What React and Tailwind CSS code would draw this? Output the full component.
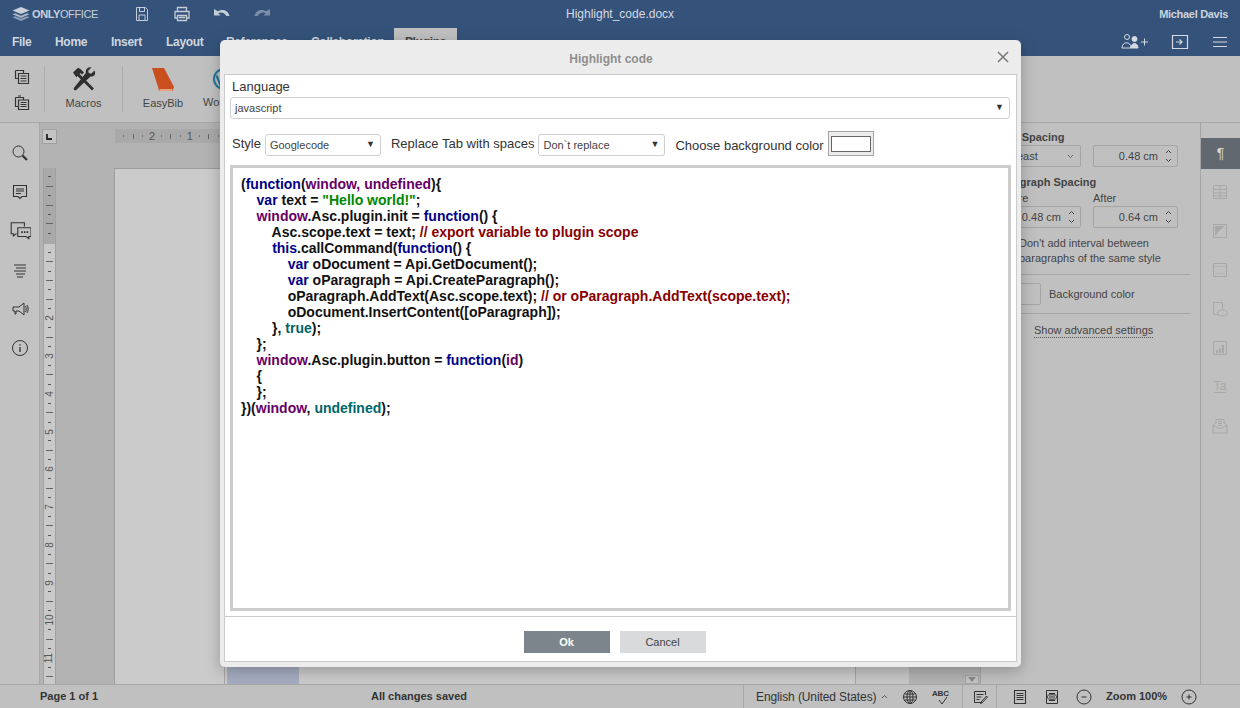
const FONT = "font-['Liberation_Sans',Arial,sans-serif]";
const TICK_H = Array.from({ length: 11 }, (_, i) => i);
const TICK_V = Array.from({ length: 54 }, (_, i) => i);

// token colours for the highlighted code
const K = 'text-[#000088]';
const P = 'text-[#660066]';
const S = 'text-[#008800]';
const C = 'text-[#880000]';
const L = 'text-[#006666]';

const CODE = [
  [['(', ''], ['function', K], ['(', ''], ['window, undefined', P], [')', ''], ['{', '']],
  [['    ', ''], ['var', K], [' text = ', ''], ['"Hello world!"', S], [';', '']],
  [['    ', ''], ['window', P], ['.Asc.plugin.init = ', ''], ['function', K], ['() {', '']],
  [['        Asc.scope.text = text; ', ''], ['// export variable to plugin scope', C]],
  [['        ', ''], ['this', K], ['.callCommand(', ''], ['function', K], ['() {', '']],
  [['            ', ''], ['var', K], [' oDocument = Api.GetDocument();', '']],
  [['            ', ''], ['var', K], [' oParagraph = Api.CreateParagraph();', '']],
  [['            oParagraph.AddText(Asc.scope.text); ', ''], ['// or oParagraph.AddText(scope.text);', C]],
  [['            oDocument.InsertContent([oParagraph]);', '']],
  [['        }, ', ''], ['true', L], [');', '']],
  [['    };', '']],
  [['    ', ''], ['window', P], ['.Asc.plugin.button = ', ''], ['function', K], ['(', ''], ['id', P], [')', '']],
  [['    {', '']],
  [['    };', '']],
  [['})(', ''], ['window', P], [', ', ''], ['undefined', L], [');', '']],
];

function Svg({ size = 20, box = 20, className = '', children }) {
  return (
    <svg width={size} height={size} viewBox={`0 0 ${box} ${box}`} fill="none" stroke="currentColor" strokeWidth="1" className={`shrink-0 ${className}`}>
      {children}
    </svg>
  );
}

function TopIcon({ name }) {
  if (name === 'save') return <Svg><path d="M4.500 3.500h9l2 2v11h-11z M7.500 3.500v4h5v-4 M7 16v-5h6v5" /></Svg>;
  if (name === 'print') return <Svg><path d="M5.500 7V3.500h9V7 M5.500 14H3V7.500h14V14h-2.500 M5.500 11.500h9v5h-9z M7 13.500h6" strokeWidth="1.300" /></Svg>;
  const undo = <path d="M2 5v6.500h6.500L6.300 9.300c2.200-1.500 5.500-1.200 8.200 2.700h3c-1-5-6-8-11.700-4.700z" fill="currentColor" stroke="none" />;
  if (name === 'undo') return <Svg>{undo}</Svg>;
  return <Svg className="scale-x-[-1]">{undo}</Svg>;
}

function Logo() {
  return (
    <svg width="18" height="14" viewBox="0 0 18 14" fill="#c9d0da" className="shrink-0">
      <path d="M9 0l8.500 3.500L9 7 .5 3.500z" />
      <path d="M3 6.300L.5 7.300 9 11l8.500-3.700L15 6.300 9 8.700z" opacity=".8" />
      <path d="M3 9.300L.5 10.300 9 14l8.500-3.700L15 9.300 9 11.700z" opacity=".6" />
    </svg>
  );
}

function CopyIcon({ paste }) {
  return (
    <svg width="16" height="16" viewBox="0 0 16 16" fill="none" stroke="#333" strokeWidth="1.200" className="shrink-0">
      {paste ? (
        <path d="M1.500 2.500h8v2 M1.500 2.500v9h3 M4.500 5h10v9.500h-10z M6.500 7.500h6 M6.500 9.500h6 M6.500 11.500h6 M4 1h3" />
      ) : (
        <path d="M1.500 1.500h8v3 M1.500 1.500v8h3 M4.500 4.500h10v10h-10z M6.500 7h6 M6.500 9.500h6 M6.500 12h6" />
      )}
    </svg>
  );
}

function Macros() {
  return (
    <svg width="24" height="24" viewBox="0 0 24 24" className="shrink-0" fill="#2f2f2f">
      <path d="M1 5.500L6 .8l2.500 1.200L12 5.500 10 7.500 8.500 6 7.600 7 22 21.500 20 23.500 5.500 9l-1.200 1.200z" />
      <path d="M22.500 3.500l-3.300 3.200-2.400-.6-.6-2.400L19.500.5c-3-.8-6 1.200-5.700 4.500.1.700 0 1.200-.4 1.600L2.300 20.500c-.9 1-.8 1.700-.1 2.400.7.600 1.500.6 2.300-.2L18 10c.4-.3.900-.5 1.500-.4 3 .2 4.600-3 3-6.100z" />
    </svg>
  );
}

function EasyBib() {
  return (
    <svg width="24" height="26" viewBox="0 0 24 26" className="shrink-0">
      <path d="M1 1h12l10 19-1.500 4H9.500C8 24 7.500 23 7.500 21.500z" fill="#c94f1f" />
      <path d="M8 22h13.500l-.6 2H9.500z" fill="#e8a283" />
    </svg>
  );
}

function WordPress() {
  return (
    <svg width="22" height="22" viewBox="0 0 22 22" className="ml-[10px] shrink-0">
      <circle cx="11" cy="11" r="11" fill="#21759b" />
      <circle cx="11" cy="11" r="9" fill="#c0c0c0" />
      <path d="M2.500 8l5.500 13.500h2L4.500 7z" fill="#21759b" />
    </svg>
  );
}

function RailIcon({ name }) {
  if (name === 'search') return <Svg><circle cx="8.500" cy="8.500" r="5.500" /><path d="M12.500 12.500l4.500 4.500" strokeWidth="2.200" /></Svg>;
  if (name === 'comment') return <Svg><path d="M3.500 3.500h13v11h-4.500L10 16.500 8 14.500H3.500z M6 7h8 M6 9h8 M6 11.500h5" strokeWidth="1.100" /></Svg>;
  if (name === 'chat') return <Svg size={22}><path d="M14 6V2.500H2v10h2v2l2.500-2H7 M8 7h12v8h-2v2l-2.500-2H8z" strokeWidth="1" /><path d="M11 11h1.500 M13.500 11H15 M16 11h1.500" strokeWidth="1.500" /></Svg>;
  if (name === 'nav') return <Svg><path d="M4 5h12 M6 8h10 M4 11h12 M6 14h9 M7 17h6" /></Svg>;
  if (name === 'speaker') return <Svg><path d="M3 8h6l5-4v12l-5-4H6v3H5v-3H3z M15.500 7c1 1.500 1 4.500 0 6 M17 6c1.500 2 1.500 6 0 8" /></Svg>;
  return <Svg><circle cx="10" cy="10" r="7.500" /><path d="M10 9v5" strokeWidth="1.300" /><path d="M10 6.200v1.200" strokeWidth="1.300" /></Svg>;
}

function RightRailIcon({ name }) {
  if (name === 'table') return <Svg><path d="M3.500 3.500h13v13h-13z M3.500 7.500h13 M3.500 11h13 M3.500 14h13 M10 3.500v13" /></Svg>;
  if (name === 'image') return <Svg><path d="M3.500 3.500h13v13h-13z" /><path d="M5 5h10l-5 4-5 6z" fill="currentColor" stroke="none" /></Svg>;
  if (name === 'header') return <Svg><path d="M3.500 3.500h13v13h-13z" /><path d="M3.500 6.500h13 M3.500 13.500h13" strokeDasharray="1 1" /></Svg>;
  if (name === 'shape') return <Svg><path d="M8 15.500H3.500v-12h9V10" /><ellipse cx="12.500" cy="14" rx="5" ry="3" /></Svg>;
  if (name === 'chart') return <Svg><path d="M3.500 3.500h13v13h-13z" /><path d="M7 12v3 M10 10v5 M13 7v8" strokeWidth="2" /></Svg>;
  if (name === 'art') return <span className="border-b border-current text-[12px] leading-[12px]">Ta</span>;
  return <Svg><path d="M3 9l3-2V3.500h8V7l3 2v8H3z M3 9l7 4 7-4 M8 5.500h4 M8 7.500h4 M8 9.500h4" /></Svg>;
}

function StatusIcon({ name }) {
  if (name === 'globe') return <Svg size={16} box={16}><circle cx="8" cy="8" r="6.500" /><ellipse cx="8" cy="8" rx="3" ry="6.500" /><path d="M1.500 8h13 M8 1.500v13 M2.500 5h11 M2.500 11h11" /></Svg>;
  if (name === 'spell') return <span className="relative flex h-4 w-5 justify-center text-[8px] font-bold leading-[9px]">ABC<svg width="12" height="8" viewBox="0 0 12 8" fill="none" stroke="currentColor" className="absolute bottom-0 right-[2px]"><path d="M3 3l3 4 5-7" /></svg></span>;
  if (name === 'track') return <Svg size={16} box={16}><path d="M13.500 6V2.500h-11v11h7 M4.500 5.500h7 M4.500 8h5 M4.500 10.500h3 M9 13l5.500-6 1 1-5.500 6-1.500.5z" /></Svg>;
  if (name === 'fitpage') return <Svg size={16} box={16}><path d="M2.500 1.500h11v13h-11z M4.500 4.500h7 M4.500 6.500h7 M4.500 8.500h7 M4.500 10.500h7" strokeWidth="1.100" /></Svg>;
  if (name === 'fitwidth') return <Svg size={16} box={16}><path d="M2.500 1.500h11v13h-11z M5 4.500h6 M5 11.500h6" /><ellipse cx="8" cy="8" rx="5" ry="2.300" /><path d="M5 8h6" /></Svg>;
  if (name === 'minus') return <Svg size={16} box={16}><circle cx="8" cy="8" r="7" /><path d="M5.500 8h5" /></Svg>;
  return <Svg size={16} box={16}><circle cx="8" cy="8" r="7" /><path d="M5.500 8h5 M8 5.500v5" /></Svg>;
}

function Stepper() {
  return (
    <svg width="7" height="16" viewBox="0 0 7 16" fill="none" stroke="#444" className="shrink-0">
      <path d="M1 5l2.500-2.500L6 5 M1 11l2.500 2.500L6 11" />
    </svg>
  );
}

function Field({ className = '', value }) {
  return (
    <div className={`flex h-[22px] items-center justify-end gap-[7px] rounded-[2px] border border-[#a5a5a5] pr-[5px] text-[11px] text-[#444] ${className}`}>
      {value}
      <Stepper />
    </div>
  );
}

function NativeSelect({ value, className = '' }) {
  return (
    <div className={`flex h-[22px] shrink-0 items-center justify-between rounded-[3px] border border-[#cfcfcf] bg-white pl-[4px] pr-[5px] text-[11px] text-[#444] ${className}`}>
      <span>{value}</span>
      <span className="text-[9px] text-[#333]">▼</span>
    </div>
  );
}

function Dialog() {
  return (
    <div className="absolute left-[220px] top-[40px] z-10 flex h-[627px] w-[801px] flex-col rounded-[5px] bg-[#ececec] px-[4px] pb-[5px] shadow-[0_4px_15px_rgba(0,0,0,0.25)]">
      <div className="relative flex h-[34px] shrink-0 items-center justify-center pr-[19px] pt-[3px] text-[12px] font-bold text-[#8f8f8f]">
        Highlight code
        <svg width="12" height="12" viewBox="0 0 12 12" fill="none" stroke="#777" strokeWidth="1.500" className="absolute right-[8px] top-[11px]">
          <path d="M1 1l10 10 M11 1L1 11" />
        </svg>
      </div>
      <div className="flex min-h-0 flex-1 flex-col border border-[#cbcbcb] bg-white">
        <div className="flex flex-col px-[5px]">
          <div className="pl-[2px] pt-[4px] text-[13px] leading-[16px] text-[#333]">Language</div>
          <NativeSelect value="javascript" className="mt-[2px] w-[780px]" />
          <div className="mt-[12px] flex h-[25px] items-center pl-[2px] text-[13px] text-[#333]">
            <span className="mt-[1px]">Style</span>
            <NativeSelect value="Googlecode" className="ml-[4px] mt-[3px] w-[116px]" />
            <span className="ml-[10px] mt-[1px]">Replace Tab with spaces</span>
            <NativeSelect value="Don`t replace" className="ml-[4px] mt-[3px] w-[127px]" />
            <span className="ml-[10px] mt-[5px]">Choose background color</span>
            <div className="ml-[4px] flex h-[25px] w-[46px] items-center justify-center border border-[#a5a5a5] bg-[#ececec]">
              <div className="h-[16px] w-[40px] border border-[#666] bg-white" />
            </div>
          </div>
          <div className="mt-[9px] h-[446px] whitespace-pre border-[3px] border-[#cccccc] pl-[8px] pt-[8px] text-[14px] font-bold leading-[16px] text-[#111]">
            {CODE.map((line, i) => (
              <div key={i} className="h-[16px]">
                {line.map(([text, tone], j) => (
                  <span key={j} className={tone}>{text}</span>
                ))}
              </div>
            ))}
          </div>
        </div>
        <div className="mt-[5px] flex flex-1 items-start justify-center gap-[10px] border-t border-[#cbcbcb] pr-[12px] pt-[14px]">
          <button className="h-[22px] w-[86px] bg-[#7d858c] text-[11px] font-bold text-white">Ok</button>
          <button className="h-[22px] w-[86px] bg-[#d8dadc] text-[11px] text-[#444]">Cancel</button>
        </div>
      </div>
    </div>
  );
}

function Header() {
  const tabs = [
    ['File', 43], ['Home', 56], ['Insert', 55], ['Layout', 60], ['References', 85], ['Collaboration', 95],
  ];
  return (
    <header className="h-[56px] shrink-0 bg-[#35537a] text-[#d0d6df]">
      <div className="relative flex h-[28px] items-center pl-[12px]">
        <Logo />
        <span className="ml-[2px] text-[11px] font-bold tracking-[-0.4px] text-[#c9d0da]">ONLY<span className="font-normal">OFFICE</span></span>
        <div className="ml-[34px] flex gap-[20px] text-[#c4ccd7]">
          <TopIcon name="save" />
          <TopIcon name="print" />
          <TopIcon name="undo" />
          <span className="opacity-50"><TopIcon name="redo" /></span>
        </div>
        <div className="flex-1" />
        <span className="absolute left-[566px] text-[12px] text-[#d5dae2]">Highlight_code.docx</span>
        <span className="pr-[12px] text-[11px] font-bold tracking-[-0.3px] text-[#cdd3dc]">Michael Davis</span>
      </div>
      <div className="flex h-[28px] items-center">
        {tabs.map(([name, w]) => (
          <div key={name} className="pl-[12px] text-[12px] font-bold tracking-[-0.3px]" style={{ width: w }}>{name}</div>
        ))}
        <div className="flex h-full w-[63px] items-center justify-center bg-[#c0c0c0] text-[12px] font-bold tracking-[-0.3px] text-[#444]">Plugins</div>
        <div className="ml-auto flex items-center pr-[12px] text-[#d5dae2]">
          <svg width="28" height="18" viewBox="0 0 28 18" fill="none" stroke="currentColor" className="shrink-0">
            <circle cx="6" cy="4" r="2.500" />
            <path d="M1 15c0-7 9-7 9 0z" />
            <circle cx="13.500" cy="6" r="2.500" fill="currentColor" />
            <path d="M10 15c0-6 7-6 7 0z" fill="currentColor" />
            <path d="M20 9h7 M23.500 5.500v7" />
          </svg>
          <svg width="18" height="18" viewBox="0 0 18 18" fill="none" stroke="currentColor" className="ml-[22px] shrink-0">
            <path d="M1.500 2.500h15v13h-15z M5 9h6 M8.500 6.500L11 9l-2.500 2.500" strokeWidth="1.200" />
          </svg>
          <svg width="16" height="14" viewBox="0 0 16 14" stroke="currentColor" className="ml-[23px] shrink-0">
            <path d="M1 2.500h14 M1 7h14 M1 11.500h14" />
          </svg>
        </div>
      </div>
    </header>
  );
}

function Toolbar() {
  return (
    <div className="flex h-[67px] shrink-0 items-center border-b border-[#a8a8a8] bg-[#c0c0c0] text-[11px] text-[#444]">
      <div className="flex w-[44px] flex-col items-center gap-[10px] pt-[1px]">
        <CopyIcon />
        <CopyIcon paste />
      </div>
      <div className="h-[46px] w-px bg-[#aaaaaa]" />
      <div className="flex w-[77px] flex-col items-center gap-[4px]">
        <Macros />
        <span>Macros</span>
      </div>
      <div className="h-[46px] w-px bg-[#aaaaaa]" />
      <div className="flex w-[80px] flex-col items-center gap-[2px]">
        <EasyBib />
        <span>EasyBib</span>
      </div>
      <div className="flex flex-col items-start gap-[4px]">
        <WordPress />
        <span>WordPress</span>
      </div>
    </div>
  );
}

function LeftRail() {
  return (
    <div className="flex w-[40px] shrink-0 flex-col items-center gap-[19px] border-r border-[#a8a8a8] bg-[#c2c2c2] pt-[20px] text-[#333]">
      {['search', 'comment', 'chat', 'nav', 'speaker', 'info'].map((n) => (
        <div key={n} className="flex h-[20px] w-[20px] items-center justify-center">
          <RailIcon name={n} />
        </div>
      ))}
    </div>
  );
}

function HorizontalRuler() {
  const numbers = { 3: '2', 7: '1' };
  return (
    <div className="ml-[58px] flex h-[14px] w-[600px] items-center bg-[#a9a9a9] pl-[4px] text-[11px] text-[#555]">
      {TICK_H.map((i) => (
        <div key={i} className="flex w-[9.45px] shrink-0 justify-center">
          {numbers[i] ? numbers[i] : <div className={`w-px ${i % 4 === 1 ? 'h-[5px] bg-[#666]' : 'h-[2px] bg-[#777]'}`} />}
        </div>
      ))}
    </div>
  );
}

function VerticalRuler() {
  return (
    <div className="relative ml-[3px] h-full w-[13px] shrink-0 overflow-hidden border-x border-[#a0a0a0] bg-[#c9c9c9]">
      <div className="absolute inset-x-0 top-0 h-[76px] bg-[#a9a9a9]" />
      <div className="relative flex flex-col pt-[4px] text-[10px] leading-none text-[#555]">
        {TICK_V.map((i) => {
          const offset = i - 7;
          const step = ((offset % 4) + 4) % 4;
          const num = offset / 4;
          return (
            <div key={i} className="flex h-[9.45px] shrink-0 items-center justify-center">
              {step === 0 && num >= 2 ? (
                <span className="-rotate-90">{num}</span>
              ) : step === 0 && num === 0 ? null : step === 1 || step === 3 ? (
                <div className="h-px w-[3px] bg-[#555]" />
              ) : (
                <div className="h-px w-[7px] bg-[#666]" />
              )}
            </div>
          );
        })}
      </div>
    </div>
  );
}

function Workspace() {
  return (
    <div className="flex min-w-0 flex-1 flex-col bg-[#b3b3b3]">
      <div className="flex h-[45px] shrink-0 items-start pl-[2px] pt-[6px]">
        <div className="flex h-[15px] w-[15px] items-center justify-center border border-[#a0a0a0] bg-[#c4c4c4]">
          <svg width="7" height="7" viewBox="0 0 7 7" className="shrink-0"><path d="M1 1v5h5" fill="none" stroke="#222" strokeWidth="1.800" /></svg>
        </div>
        <HorizontalRuler />
      </div>
      <div className="flex min-h-0 flex-1">
        <VerticalRuler />
        <div className="w-[58px] shrink-0" />
        <div className="flex w-[741px] shrink-0 flex-col border-l border-t border-[#9c9c9c] bg-[#cbcbcb]">
          <div className="flex-1" />
          <div className="flex h-[17px] shrink-0">
            <div className="w-[110px] border-r border-[#a5a5a5]" />
            <div className="ml-[2px] w-[72px] bg-[#a5adc0]" />
          </div>
        </div>
        <div className="w-[54px] shrink-0 border-l border-[#a5a5a5] bg-[#c7c7c7]" />
        <div className="flex flex-1 flex-col justify-end">
          <div className="flex h-[9px] justify-end">
            <div className="flex w-[14px] items-center justify-center border border-[#a5a5a5] bg-[#c4c4c4]">
              <div className="h-0 w-0 border-x-[4px] border-t-[5px] border-x-transparent border-t-[#888]" />
            </div>
            <div className="w-px" />
          </div>
        </div>
      </div>
    </div>
  );
}

function SidePanel() {
  return (
    <div className="w-[220px] shrink-0 border-l border-[#a5a5a5] bg-[#c0c0c0] pl-[15px] pr-[10px] pt-[6px] text-[11px] text-[#444]">
      <div className="h-[16px] font-bold leading-[16px]">Line Spacing</div>
      <div className="flex w-[182px] justify-between">
        <div className="flex h-[22px] w-[85px] items-center justify-between rounded-[2px] border border-[#a5a5a5] pl-[4px] pr-[6px] text-[11px]">
          At least
          <svg width="7" height="5" viewBox="0 0 7 5" fill="none" stroke="#666" className="shrink-0"><path d="M1 1l2.500 2.500L6 1" /></svg>
        </div>
        <Field className="w-[85px]" value="0.48 cm" />
      </div>
      <div className="mt-[7px] h-[16px] font-bold leading-[16px]">Paragraph Spacing</div>
      <div className="flex w-[182px] justify-between leading-[16px]">
        <span className="w-[85px]">Before</span>
        <span className="w-[85px]">After</span>
      </div>
      <div className="flex w-[182px] justify-between">
        <Field className="w-[85px]" value="0.48 cm" />
        <Field className="w-[85px]" value="0.64 cm" />
      </div>
      <div className="mt-[8px] flex">
        <div className="mt-[1px] h-[13px] w-[13px] shrink-0 rounded-[2px] border border-[#a5a5a5]" />
        <div className="ml-[10px] leading-[15px]">Don't add interval between<br />paragraphs of the same style</div>
      </div>
      <div className="mt-[8px] border-t border-[#a5a5a5] pt-[8px]">
        <div className="flex h-[22px] items-center">
          <div className="h-[22px] w-[45px] rounded-[2px] border border-[#a5a5a5]" />
          <span className="ml-[8px]">Background color</span>
        </div>
      </div>
      <div className="mt-[8px] border-t border-[#a5a5a5] pl-[38px] pt-[8px]">
        <span className="border-b border-dotted border-[#555] pb-[1px]">Show advanced settings</span>
      </div>
    </div>
  );
}

function RightRail() {
  return (
    <div className="flex w-[40px] shrink-0 flex-col border-l border-[#a5a5a5] bg-[#c0c0c0] pt-[15px] text-[#a8a8a8]">
      <div className="flex h-[31px] items-center justify-center bg-[#626870] text-[14px] text-[#d8d8d8]">¶</div>
      {['table', 'image', 'header', 'shape', 'chart', 'art', 'mail'].map((n) => (
        <div key={n} className="flex h-[39px] items-center justify-center pr-[1px] pt-[6px]">
          <RightRailIcon name={n} />
        </div>
      ))}
    </div>
  );
}

function StatusBar() {
  return (
    <footer className="flex h-[24px] shrink-0 items-center border-t border-[#a8a8a8] bg-[#c0c0c0] text-[11px] text-[#333]">
      <span className="ml-[40px] w-[331px] font-bold">Page 1 of 1</span>
      <span className="w-[372px] font-bold">All changes saved</span>
      <div className="flex h-full w-[219px] items-center border-l border-[#a8a8a8] pl-[12px] text-[12px] tracking-[-0.1px]">
        English (United States)
        <svg width="7" height="5" viewBox="0 0 7 5" fill="none" stroke="#555" className="ml-[5px] shrink-0"><path d="M1 4l2.500-2.500L6 4" /></svg>
        <span className="ml-[14px]"><StatusIcon name="globe" /></span>
        <span className="ml-[12px]"><StatusIcon name="spell" /></span>
      </div>
      <div className="flex h-full w-[34px] items-center justify-center border-l border-[#a8a8a8]">
        <StatusIcon name="track" />
      </div>
      <div className="flex h-full flex-1 items-center border-l border-[#a8a8a8] pl-[15px]">
        <StatusIcon name="fitpage" />
        <span className="ml-[16px]"><StatusIcon name="fitwidth" /></span>
        <span className="ml-[16px]"><StatusIcon name="minus" /></span>
        <span className="ml-[14px] font-bold">Zoom 100%</span>
        <span className="ml-[14px]"><StatusIcon name="plus" /></span>
      </div>
    </footer>
  );
}

export default function App() {
  return (
    <div className={`relative flex h-[708px] w-[1240px] flex-col overflow-hidden bg-[#c0c0c0] ${FONT}`}>
      <Header />
      <Toolbar />
      <div className="flex min-h-0 flex-1">
        <LeftRail />
        <Workspace />
        <SidePanel />
        <RightRail />
      </div>
      <StatusBar />
      <Dialog />
    </div>
  );
}
